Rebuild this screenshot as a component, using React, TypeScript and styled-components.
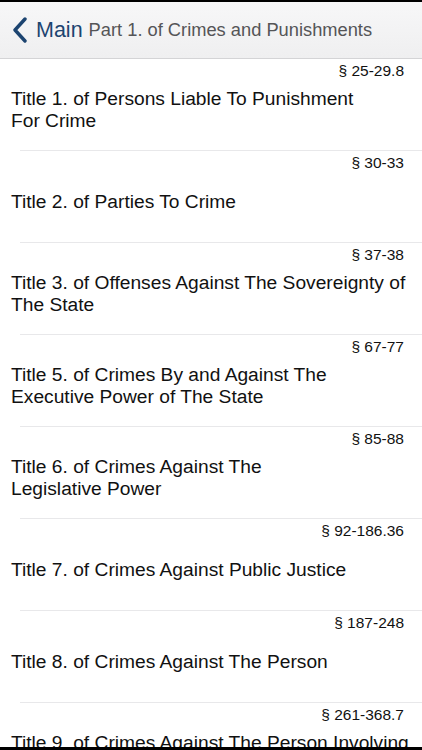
import React from 'react';
import styled, { createGlobalStyle } from 'styled-components';

const GlobalStyle = createGlobalStyle`
  html, body {
    margin: 0;
    padding: 0;
    background: #000;
  }
  body {
    font-family: "Liberation Sans", Arial, sans-serif;
    -webkit-font-smoothing: antialiased;
  }
`;

// lines broken where the app breaks them
const titles = [
    { range: '§ 25-29.8', lines: ['Title 1. of Persons Liable To Punishment', 'For Crime'] },
    { range: '§ 30-33', lines: ['Title 2. of Parties To Crime'] },
    { range: '§ 37-38', lines: ['Title 3. of Offenses Against The Sovereignty of', 'The State'] },
    { range: '§ 67-77', lines: ['Title 5. of Crimes By and Against The', 'Executive Power of The State'] },
    { range: '§ 85-88', lines: ['Title 6. of Crimes Against The', 'Legislative Power'] },
    { range: '§ 92-186.36', lines: ['Title 7. of Crimes Against Public Justice'] },
    { range: '§ 187-248', lines: ['Title 8. of Crimes Against The Person'] },
    { range: '§ 261-368.7', lines: ['Title 9. of Crimes Against The Person Involving', 'Sexual Assault'] },
];

function App() {
    return (
        <>
            <GlobalStyle />
            <Screen>
                <NavBar>
                    <BackButton>
                        <svg width="16" height="26" viewBox="0 0 16 26">
                            <path d="M13 2 L3 13 L13 24" fill="none" stroke="#1c4470" strokeWidth="3.4" strokeLinecap="round" strokeLinejoin="round" />
                        </svg>
                        <BackLabel>Main</BackLabel>
                    </BackButton>
                    <NavTitle>Part 1. of Crimes and Punishments</NavTitle>
                </NavBar>
                <List>
                    {titles.map((t) => (
                        <Row key={t.range}>
                            <Range>{t.range}</Range>
                            <TitleBox>
                                <TitleText>
                                    {t.lines.map((l) => (
                                        <Line key={l}>{l}</Line>
                                    ))}
                                </TitleText>
                            </TitleBox>
                        </Row>
                    ))}
                </List>
            </Screen>
        </>
    );
}
export default App;

const Screen = styled.div`
width: 422px;
height: 745px;
margin-top: 2px;
background: #fff;
overflow: hidden;
display: flex;
flex-direction: column;
`;

const NavBar = styled.div`
height: 56px;
flex-shrink: 0;
display: flex;
align-items: center;
padding-left: 12px;
background: linear-gradient(to bottom, #f7f7f8, #efeff0);
border-bottom: 1px solid #d4d4d6;
`;

const BackButton = styled.div`
display: flex;
align-items: center;
gap: 8px;
`;

const BackLabel = styled.span`
font-size: 21.5px;
color: #1c4470;
`;

const NavTitle = styled.span`
margin-left: 6px;
font-size: 18.3px;
color: #555557;
`;

const List = styled.div`
display: flex;
flex-direction: column;
`;

const Row = styled.div`
height: 92px;
flex-shrink: 0;
box-sizing: border-box;
display: flex;
flex-direction: column;
border-bottom: 1px solid #e8e8ea;
margin-left: 20px;
`;

const Range = styled.div`
margin-top: 2px;
padding-right: 18px;
text-align: right;
font-size: 15.5px;
line-height: 20px;
color: #111;
`;

const TitleBox = styled.div`
flex: 1;
display: flex;
align-items: center;
margin-left: -9px;
padding-bottom: 12px;
`;

const TitleText = styled.div`
font-size: 19.2px;
line-height: 22px;
color: #111;
white-space: nowrap;
`;

const Line = styled.div``;
